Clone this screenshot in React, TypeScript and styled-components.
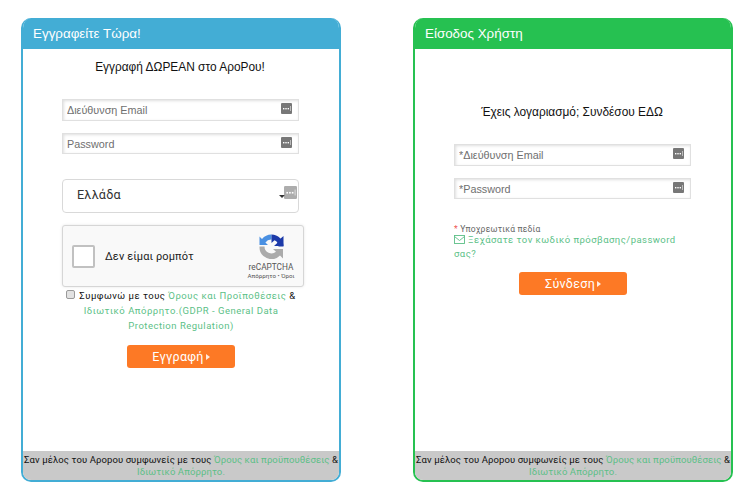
import React from "react";
import styled, { createGlobalStyle } from "styled-components";

const Global = createGlobalStyle`
  html, body { margin: 0; padding: 0; background: #fff; }
  body { font-family: "Roboto", "Liberation Sans", sans-serif; color: #111; }
  * { box-sizing: border-box; }
`;

const Page = styled.div`
  display: flex;
  gap: 72px;
  width: 750px;
  height: 486px;
  padding: 18px 0 4px 21px;
  overflow: hidden;
`;

const Panel = styled.section<{ $color: string }>`
  display: flex;
  flex-direction: column;
  width: 320px;
  height: 464px;
  border: 2px solid ${(p) => p.$color};
  border-top: 0;
  border-radius: 10px;
  overflow: hidden;
  background: #fff;
`;

const Header = styled.h2<{ $color: string }>`
  margin: 0 -2px;
  height: 31px;
  padding: 0 0 0 12px;
  background: ${(p) => p.$color};
  color: #fff;
  font: 400 13.4px/31px "Liberation Sans", sans-serif;
  flex: none;
`;

const Body = styled.div<{ $top: number }>`
  flex: 1;
  padding: ${(p) => p.$top}px 39px 0;
  display: flex;
  flex-direction: column;
`;

const Lead = styled.p<{ $gap: number }>`
  margin: 0 0 ${(p) => p.$gap}px -2px;
  font: 400 11.9px/18px "Liberation Sans", sans-serif;
  text-align: center;
  color: #111;
`;

const Field = styled.div<{ $gap: number; $h: number }>`
  position: relative;
  width: 237px;
  height: ${(p) => p.$h}px;
  margin-bottom: ${(p) => p.$gap}px;
`;

const TextInput = styled.input`
  display: block;
  width: 100%;
  height: 100%;
  padding: 0 4px;
  border: 1px solid #e0e0e0;
  box-shadow: inset 1px 1px 3px rgba(0, 0, 0, 0.13);
  outline: 0;
  font: 400 10.8px "Liberation Sans", sans-serif;
  &::placeholder { color: #6f6f6f; opacity: 1; }
`;

const KeyBadge = styled.svg`
  position: absolute;
  display: block;
`;

const FieldKey = styled(KeyBadge)`
  top: 4px;
  right: 7px;
`;

const SelectKey = styled(KeyBadge)`
  top: 6px;
  right: 1px;
  opacity: 0.6;
`;

const SelectBox = styled.div`
  position: relative;
  width: 237px;
  height: 34px;
  padding-left: 14px;
  margin-bottom: 12px;
  border: 1px solid #d9d9d9;
  border-radius: 4px;
  font: 400 12.6px/29px "Roboto", sans-serif;
  letter-spacing: 0.2px;
  color: #333;
`;

const Caret = styled.span`
  position: absolute;
  top: 15px;
  right: 13px;
  width: 0;
  height: 0;
  border: 3px solid transparent;
  border-top: 3px solid #333;
  border-bottom: 0;
`;

const Captcha = styled.div`
  display: flex;
  align-items: center;
  width: 242px;
  height: 62px;
  padding: 0 16px 0 9px;
  border: 1px solid #d6d6d6;
  border-radius: 3px;
  background: #f9f9f9;
  box-shadow: 0 0 3px rgba(0, 0, 0, 0.1);
`;

const CaptchaBox = styled.span`
  width: 23px;
  height: 23px;
  border: 2px solid #c1c1c1;
  border-radius: 2px;
  background: #fff;
  flex: none;
`;

const CaptchaLabel = styled.span`
  margin-left: 10px;
  flex: 1;
  font: 400 11px "Roboto", sans-serif;
  letter-spacing: 0.1px;
  color: #222;
`;

const CaptchaBrand = styled.div`
  display: flex;
  flex-direction: column;
  align-items: center;
  width: 32px;
  margin-top: 2px;
`;

const BrandName = styled.span`
  margin-top: 3px;
  font: 400 8.3px/10px "Roboto", sans-serif;
  color: #555;
`;

const BrandLinks = styled.span`
  font: 400 6.2px/9px "Roboto", sans-serif;
  color: #555;
  white-space: nowrap;
`;

const Terms = styled.p`
  margin: 1px 0 0;
  font: 400 9.5px/15px "Roboto", sans-serif;
  letter-spacing: 0.5px;
  text-align: center;
  color: #111;
`;

const Check = styled.input`
  appearance: none;
  width: 9px;
  height: 9px;
  margin: 0 4px 0 0;
  vertical-align: 0;
  background: #e2e2e2;
  border: 1px solid #9a9a9a;
  border-radius: 2px;
`;

const Link = styled.a`
  color: #5cbf87;
  text-decoration: none;
`;

const Submit = styled.button<{ $top: number }>`
  display: flex;
  align-items: center;
  justify-content: center;
  gap: 2px;
  align-self: center;
  width: 108px;
  height: 23px;
  margin-top: ${(p) => p.$top}px;
  border: 0;
  border-radius: 3px;
  background: #fd7925;
  color: #fff;
  font: 400 12.5px "Roboto", sans-serif;
  letter-spacing: 0.3px;
`;

const Arrow = styled.span`
  width: 0;
  height: 0;
  border-left: 4px solid #fff;
  border-top: 3px solid transparent;
  border-bottom: 3px solid transparent;
  opacity: 0.85;
`;

const Required = styled.div`
  margin-top: 25px;
  font: 400 8.5px/11px "Roboto", sans-serif;
  letter-spacing: 0.2px;
  color: #666;
`;

const Star = styled.span`
  color: #e55;
`;

const Forgot = styled.a`
  display: block;
  margin-top: -2px;
  font: 400 9.5px/14px "Roboto", sans-serif;
  letter-spacing: 0.46px;
  color: #5cbf87;
  text-decoration: none;
`;

const Mail = styled.svg`
  vertical-align: -1px;
  margin-right: 3px;
`;

const Footer = styled.footer`
  flex: none;
  height: 30px;
  margin: 0 -2px -1px;
  padding: 3px 0 0;
  background: #c9c9c9;
  text-align: center;
  font: 400 9.5px/12px "Roboto", sans-serif;
  letter-spacing: 0.1px;
  color: #111;
`;

const Key = ({ as: Comp, size = 11 }: { as: typeof FieldKey; size?: number }) => (
  <Comp width={size} height={size} viewBox="0 0 11 11">
    <rect width="11" height="11" rx="1" fill="#777" />
    <rect x="2" y="5" width="1.4" height="1.4" fill="#fff" />
    <rect x="4.3" y="5" width="1.4" height="1.4" fill="#fff" />
    <rect x="6.6" y="5" width="1.4" height="1.4" fill="#fff" />
    <rect x="9" y="3" width="0.8" height="5" fill="#ccc" />
  </Comp>
);

const RecaptchaLogo = () => (
  <svg width="25" height="25" viewBox="0 0 25 25">
    <path d="M12.5 0.5 A12 12 0 0 0 3 5 L0.5 2.5 V11 H9 L6.4 8.4 A7 7 0 0 1 12.5 5.5 Z" fill="#4a90e2" />
    <path d="M12.5 0.5 A12 12 0 0 1 24.5 12.5 V12.5 L24.5 12.5 H19.5 A7 7 0 0 0 15.5 6.2 L12.5 9 V0.5 Z" fill="#1c3aa9" />
    <path d="M24.5 2 V12 H15 L18 9.2 L21 5 Z" fill="#1c3aa9" />
    <path d="M0.5 12.5 H5.5 A7 7 0 0 0 17 17.8 L14 15 H24 V24.5 L21 21.5 A12 12 0 0 1 0.5 12.5 Z" fill="#ababab" />
  </svg>
);

const PanelFooter = () => (
  <Footer>
    Σαν μέλος του Αροpου συμφωνείς με τους <Link>Όρους και προϋπουθέσεις</Link> &amp;{" "}
    <Link>Ιδιωτικό Απόρρητο.</Link>
  </Footer>
);

export default function App() {
  return (
    <Page>
      <Global />
      <Panel $color="#43add5">
        <Header $color="#43add5">Εγγραφείτε Τώρα!</Header>
        <Body $top={9}>
          <Lead $gap={23}>Εγγραφή ΔΩΡΕΑΝ στο ΑροΡου!</Lead>
          <Field $gap={12} $h={22}>
            <TextInput placeholder="Διεύθυνση Email" />
            <Key as={FieldKey} />
          </Field>
          <Field $gap={25} $h={21}>
            <TextInput placeholder="Password" />
            <Key as={FieldKey} />
          </Field>
          <SelectBox>
            Ελλάδα
            <Caret />
            <Key as={SelectKey} size={13} />
          </SelectBox>
          <Captcha>
            <CaptchaBox />
            <CaptchaLabel>Δεν είμαι ρομπότ</CaptchaLabel>
            <CaptchaBrand>
              <RecaptchaLogo />
              <BrandName>reCAPTCHA</BrandName>
              <BrandLinks>Απόρρητο • Όροι</BrandLinks>
            </CaptchaBrand>
          </Captcha>
          <Terms>
            <Check type="checkbox" />
            Συμφωνώ με τους <Link>Όρους και Προϊποθέσεις</Link> &amp;{" "}
            <Link>Ιδιωτικό Απόρρητο.(GDPR - General Data Protection Regulation)</Link>
          </Terms>
          <Submit $top={12}>
            Εγγραφή <Arrow />
          </Submit>
        </Body>
        <PanelFooter />
      </Panel>
      <Panel $color="#26c151">
        <Header $color="#26c151">Είσοδος Χρήστη</Header>
        <Body $top={54}>
          <Lead $gap={23}>Έχεις λογαριασμό; Συνδέσου ΕΔΩ</Lead>
          <Field $gap={12} $h={22}>
            <TextInput placeholder="*Διεύθυνση Email" />
            <Key as={FieldKey} />
          </Field>
          <Field $gap={0} $h={21}>
            <TextInput placeholder="*Password" />
            <Key as={FieldKey} />
          </Field>
          <Required>
            <Star>*</Star> Υποχρεωτικά πεδία
          </Required>
          <Forgot>
            <Mail width="11" height="9" viewBox="0 0 11 9" fill="none" stroke="#5cbf87" strokeWidth="0.9">
              <rect x="0.5" y="0.5" width="10" height="8" />
              <path d="M0.5 1.5 L5.5 5.5 L10.5 1.5" />
            </Mail>
            Ξεχάσατε τον κωδικό πρόσβασης/password σας?
          </Forgot>
          <Submit $top={11}>
            Σύνδεση <Arrow />
          </Submit>
        </Body>
        <PanelFooter />
      </Panel>
    </Page>
  );
}
